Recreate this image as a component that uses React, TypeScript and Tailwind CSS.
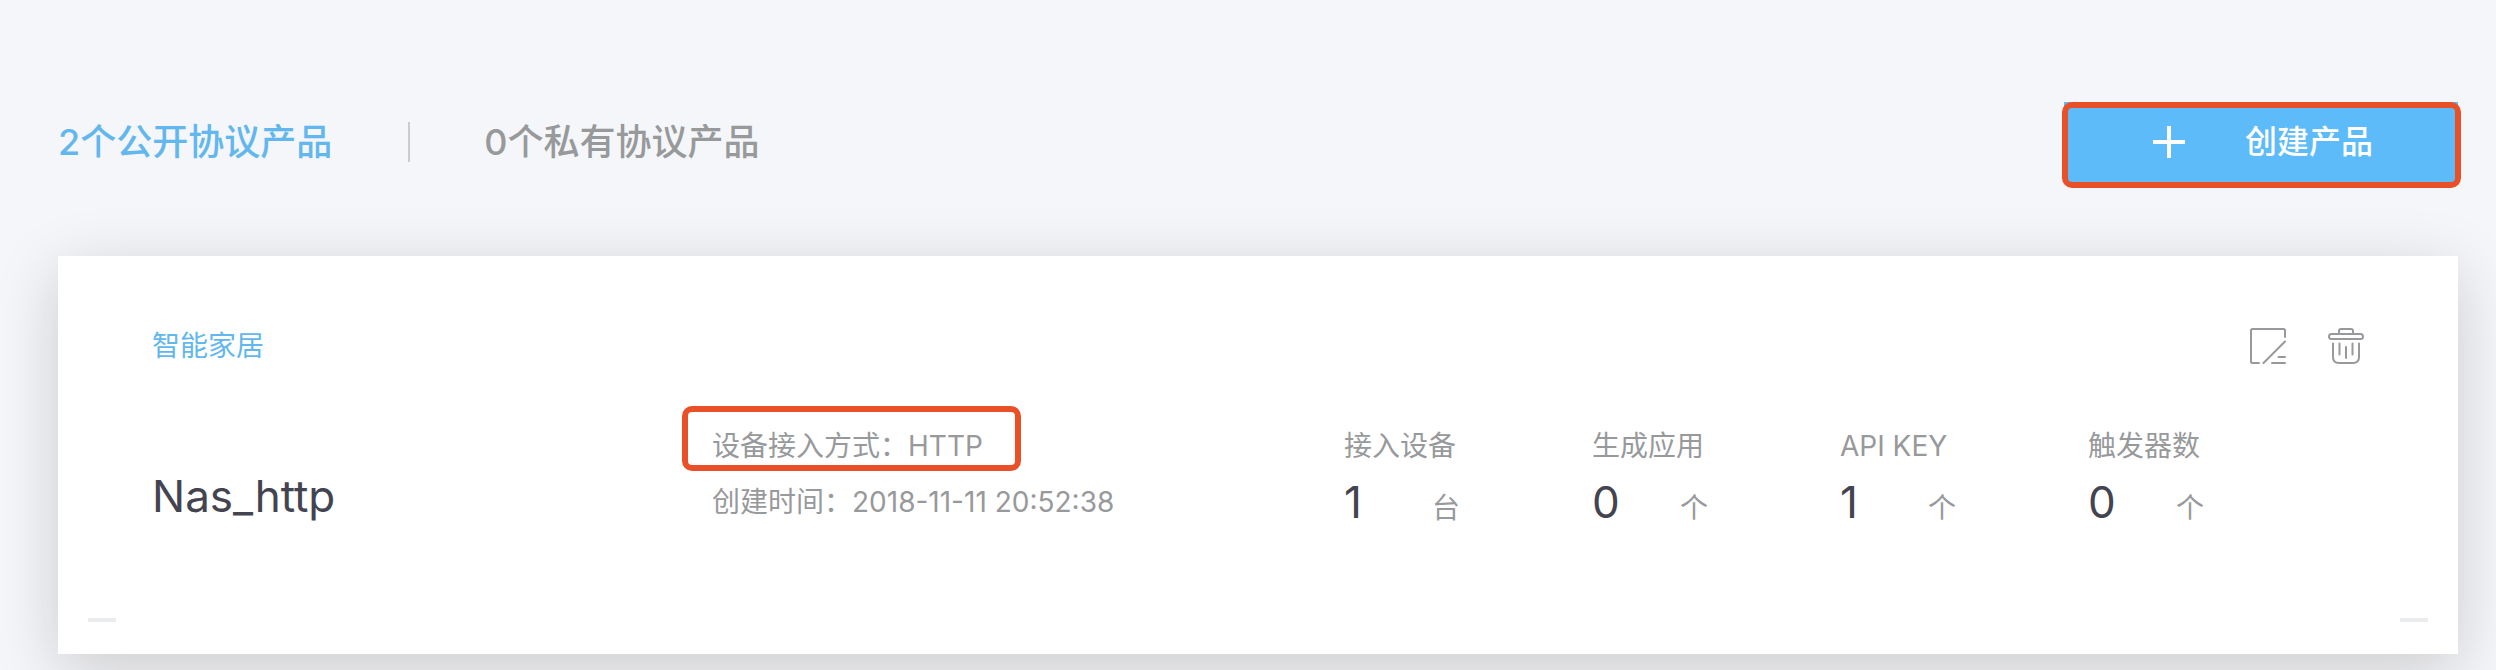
import React, { useState } from "react";

type Stat = {
  label: string;
  value: number;
  unit: string;
};

type Product = {
  category: string;
  name: string;
  protocol: string;
  createdAt: string;
  stats: Stat[];
};

const product: Product = {
  category: "智能家居",
  name: "Nas_http",
  protocol: "HTTP",
  createdAt: "2018-11-11 20:52:38",
  stats: [
    { label: "接入设备", value: 1, unit: "台" },
    { label: "生成应用", value: 0, unit: "个" },
    { label: "API KEY", value: 1, unit: "个" },
    { label: "触发器数", value: 0, unit: "个" },
  ],
};

const tabs = [
  { key: "public", label: "2个公开协议产品" },
  { key: "private", label: "0个私有协议产品" },
] as const;

type TabKey = (typeof tabs)[number]["key"];

function PlusIcon() {
  return (
    <svg className="h-8 w-8" viewBox="0 0 32 32" fill="none" stroke="currentColor" strokeWidth="4" aria-hidden="true">
      <path d="M16 0v32M0 16h32" />
    </svg>
  );
}

function EditIcon() {
  return (
    <svg
      className="h-9 w-9"
      viewBox="0 0 36 36"
      fill="none"
      stroke="currentColor"
      strokeWidth="2"
      strokeLinecap="round"
      strokeLinejoin="round"
      aria-hidden="true"
    >
      <path d="M9 35H2.5Q1 35 1 33.500V2.500Q1 1 2.500 1H33.500Q35 1 35 2.500V9" />
      <path d="M35 13.500L13.500 35M28.500 29H35M22 35H35" />
    </svg>
  );
}

function TrashIcon() {
  return (
    <svg
      className="h-9 w-9"
      viewBox="0 0 36 36"
      fill="none"
      stroke="currentColor"
      strokeWidth="2"
      strokeLinecap="round"
      strokeLinejoin="round"
      aria-hidden="true"
    >
      <path d="M11 6V3Q11 1 13 1H23Q25 1 25 3V6" />
      <rect x="1" y="6" width="34" height="5" rx="2.5" />
      <path d="M5 15.500V29Q5 35 11 35H25Q31 35 31 29V15.500" />
      <path d="M11.500 15.500V26.500M18 19V30M24.500 15.500V26.500" />
    </svg>
  );
}

// Rounded frame laid over whatever it should draw attention to
function Highlight({ className }: { className: string }) {
  return (
    <span
      className={`pointer-events-none absolute rounded-[10px] border-[6px] border-[#ea5027] ${className}`}
      aria-hidden="true"
    />
  );
}

function ProductCard({ item }: { item: Product }) {
  return (
    <article className="bg-white pt-[72px] pb-8 shadow-[0_16px_60px_rgba(20,16,0,0.18)]">
      <div className="flex h-9 items-center justify-between px-[94px]">
        <span className="text-[28px] leading-9 text-[#62b7ee]">{item.category}</span>
        <div className="flex gap-[42px] text-[#97999d]">
          <button type="button" aria-label="编辑">
            <EditIcon />
          </button>
          <button type="button" aria-label="删除">
            <TrashIcon />
          </button>
        </div>
      </div>

      <div className="mt-[54px] grid grid-cols-[560fr_632fr_248fr_248fr_248fr_248fr] pr-[122px] pl-[94px] text-[28px] leading-14 text-[#97999b]">
        <h2 className="pt-[50px] text-[44px] leading-14 text-[#434450]">{item.name}</h2>
        <div>
          <p className="relative w-fit">
            设备接入方式：{item.protocol}
            <Highlight className="-top-3 -right-[38px] bottom-[3px] -left-[30px]" />
          </p>
          <p>创建时间：{item.createdAt}</p>
        </div>
        {item.stats.map((stat) => (
          <div key={stat.label}>
            <p>{stat.label}</p>
            <p className="flex h-14 items-baseline">
              <span className="w-[88px] text-[44px] text-[#434450]">{stat.value}</span>
              <span className="leading-none">{stat.unit}</span>
            </p>
          </div>
        ))}
      </div>

      <div className="mt-[88px] flex justify-between px-[30px]">
        <span className="h-1 w-7 bg-[#ebecee]" />
        <span className="h-1 w-7 bg-[#ebecee]" />
      </div>
    </article>
  );
}

export default function App() {
  const [active, setActive] = useState<TabKey>("public");

  return (
    <main className="min-h-screen bg-[#f4f6fa] pt-[102px] pr-[38px] pl-[58px] font-['Inter','Noto_Sans_CJK_SC',sans-serif]">
      <header className="flex items-center justify-between">
        <nav className="flex items-center">
          {tabs.map((tab, i) => (
            <React.Fragment key={tab.key}>
              {i > 0 && <span className="mr-[74px] ml-[76px] h-10 w-0.5 bg-[#cbccd0]" />}
              <button
                type="button"
                onClick={() => setActive(tab.key)}
                className={`text-4xl leading-10 font-medium ${active === tab.key ? "text-[#62b7ee]" : "text-[#97999b]"}`}
              >
                {tab.label}
              </button>
            </React.Fragment>
          ))}
        </nav>

        <button
          type="button"
          className="relative flex h-20 w-[394px] items-center justify-center gap-[60px] bg-[#5dbbf9] pl-1 text-[32px] leading-10 font-medium text-white"
        >
          <PlusIcon />
          创建产品
          <Highlight className="top-0 -right-[3px] -bottom-1.5 -left-0.5" />
        </button>
      </header>

      <section className="mt-[74px]">{active === "public" && <ProductCard item={product} />}</section>
    </main>
  );
}
